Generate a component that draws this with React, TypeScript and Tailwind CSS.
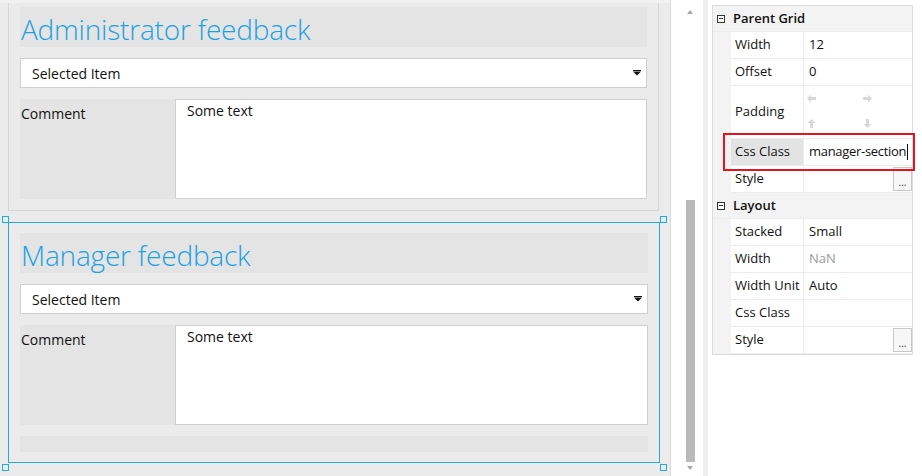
import React from 'react';

// Form designer canvas + property grid (designer view)
const FONT = { fontFamily: '"Open Sans", "Noto Sans", sans-serif' };

function Caret() {
  return (
    <svg width="8" height="6" viewBox="0 0 8 6" className="block">
      <rect x="0" y="0" width="8" height="1" fill="#111" />
      <polygon points="0,1.5 8,1.5 4,5.5" fill="#111" />
    </svg>
  );
}

function FeedbackSection({ title, footer }: { title: string; footer?: boolean }) {
  return (
    <div className="flex flex-col gap-[11px]">
      <div className="h-[40px] bg-[#e4e4e4] flex items-end">
        <span className="text-[28px] font-light tracking-[-0.2px] leading-none text-[#1ba1e2] pl-[1px] pb-[4px]">{title}</span>
      </div>
      <div className="h-[30px] bg-white border border-[#cfcfcf] flex items-center justify-between pl-[11px] pr-[5px]">
        <span className="text-[14px] text-[#111]">Selected Item</span>
        <Caret />
      </div>
      <div className="flex h-[100px]">
        <div className="w-[155px] bg-[#e4e4e4] pt-[4px] pl-[1px] text-[14px] text-[#111]">Comment</div>
        <div className="flex-1 bg-white border border-[#cfcfcf] pl-[11px] text-[14px] text-[#111]">Some text</div>
      </div>
      {footer && <div className="h-[16px] bg-[#e4e4e4]" />}
    </div>
  );
}

function Handle({ className }: { className: string }) {
  return <div className={`absolute w-[7px] h-[7px] border border-[#29a8e0] bg-[#dff1fb] ${className}`} />;
}

function Arrow({ dir }: { dir: 'left' | 'right' | 'up' | 'down' }) {
  const rot = { left: 0, right: 180, up: 90, down: 270 }[dir];
  return (
    <svg width="9" height="9" viewBox="0 0 9 9" style={{ transform: `rotate(${rot}deg)` }}>
      <polygon points="0,4.5 4,0.5 4,3 9,3 9,6 4,6 4,8.5" fill="#d8d8d8" />
    </svg>
  );
}

function GroupHeader({ label }: { label: string }) {
  return (
    <div className="h-[26px] flex items-center bg-[#f3f3f3] border-b border-[#ececec]">
      <div className="ml-[4px] w-[8px] h-[8px] border border-[#333] bg-white flex items-center justify-center">
        <div className="w-[4px] h-[1px] bg-[#333]" />
      </div>
      <span className="ml-[8px] text-[13px] font-semibold text-[#111]">{label}</span>
    </div>
  );
}

function Row({
  name, value, h = 'h-[27px]', muted, highlight, dots, cursor, children,
}: {
  name: string; value?: string; h?: string; muted?: boolean; highlight?: boolean; dots?: boolean; cursor?: boolean; children?: React.ReactNode;
}) {
  return (
    <div className={`flex ${h}`}>
      <div className="w-[18px] bg-[#f3f3f3]" />
      <div className={`w-[73px] flex items-center pl-[4px] text-[13px] text-[#111] whitespace-nowrap border-b border-r border-[#ececec] ${highlight ? 'bg-[#e3e3e3]' : 'bg-white'}`}>
        {name}
      </div>
      <div className={`relative flex-1 flex items-center pl-[5px] text-[13px] whitespace-nowrap bg-white border-b border-[#ececec] ${muted ? 'text-[#9a9a9a]' : 'text-[#111]'} ${cursor ? 'tracking-[-0.3px]' : ''}`}>
        {value}
        {cursor && <span className="inline-block w-[1px] h-[16px] bg-[#111] ml-[1px]" />}
        {children}
        {dots && (
          <div className="absolute right-0 top-[1px] bottom-[1px] w-[19px] border border-[#c8c8c8] bg-[#f7f7f7] flex items-end justify-center pb-[3px] text-[10px] leading-none text-[#333]">...</div>
        )}
      </div>
    </div>
  );
}

export default function App() {
  return (
    <div className="flex w-[922px] h-[476px] bg-white overflow-hidden" style={FONT}>
      {/* designer canvas */}
      <div className="w-[671px] h-full bg-[#ebebeb] border-r border-[#d9d9d9] flex flex-col">
        <div className="h-[3px] bg-[#f1f1f1]" />
        <div className="ml-[8px] w-[651px] border-x border-b border-[#d6d6d6] px-[11px] pt-[4px] pb-[11px]">
          <FeedbackSection title="Administrator feedback" />
        </div>
        <div className="relative ml-[8px] mt-[11px] w-[652px] border border-[#29a8e0] px-[11px] pt-[10px] pb-[10px]">
          <FeedbackSection title="Manager feedback" footer />
          <Handle className="-left-[7px] -top-[7px]" />
          <Handle className="-right-[8px] -top-[7px]" />
          <Handle className="-left-[7px] -bottom-[9px]" />
          <Handle className="-right-[8px] -bottom-[9px]" />
        </div>
      </div>

      {/* scrollbar */}
      <div className="w-[32px] h-full flex flex-col items-center pt-[10px] pb-[6px] pl-[6px]">
        <svg width="6" height="4" viewBox="0 0 6 4"><polygon points="3,0 6,4 0,4" fill="#a8a8a8" /></svg>
        <div className="flex-1 w-[9px] flex flex-col justify-end pb-[4px] mt-[4px]">
          <div className="h-[262px] w-[9px] bg-[#b9b9b9]" />
        </div>
        <svg width="6" height="4" viewBox="0 0 6 4"><polygon points="0,0 6,0 3,4" fill="#a8a8a8" /></svg>
      </div>
      <div className="w-[5px] h-full bg-[#efefef]" />

      {/* property grid */}
      <div className="ml-[4px] mt-[5px]">
        <div className="relative w-[201px] border border-[#dcdcdc] bg-[#f3f3f3]">
          <GroupHeader label="Parent Grid" />
          <Row name="Width" value="12" />
          <Row name="Offset" value="0" />
          <Row name="Padding" h="h-[53px]">
            <div className="absolute left-[3px] top-[8px]"><Arrow dir="left" /></div>
            <div className="absolute left-[59px] top-[8px]"><Arrow dir="right" /></div>
            <div className="absolute left-[3px] top-[33px]"><Arrow dir="up" /></div>
            <div className="absolute left-[59px] top-[33px]"><Arrow dir="down" /></div>
          </Row>
          <Row name="Css Class" value="manager-section" highlight cursor />
          <Row name="Style" dots />
          <GroupHeader label="Layout" />
          <Row name="Stacked" value="Small" />
          <Row name="Width" value="NaN" muted />
          <Row name="Width Unit" value="Auto" />
          <Row name="Css Class" />
          <Row name="Style" dots />
          <div className="absolute left-[10px] top-[127px] w-[192px] h-[38px] border-2 border-[#e3141f]" />
        </div>
      </div>
    </div>
  );
}
